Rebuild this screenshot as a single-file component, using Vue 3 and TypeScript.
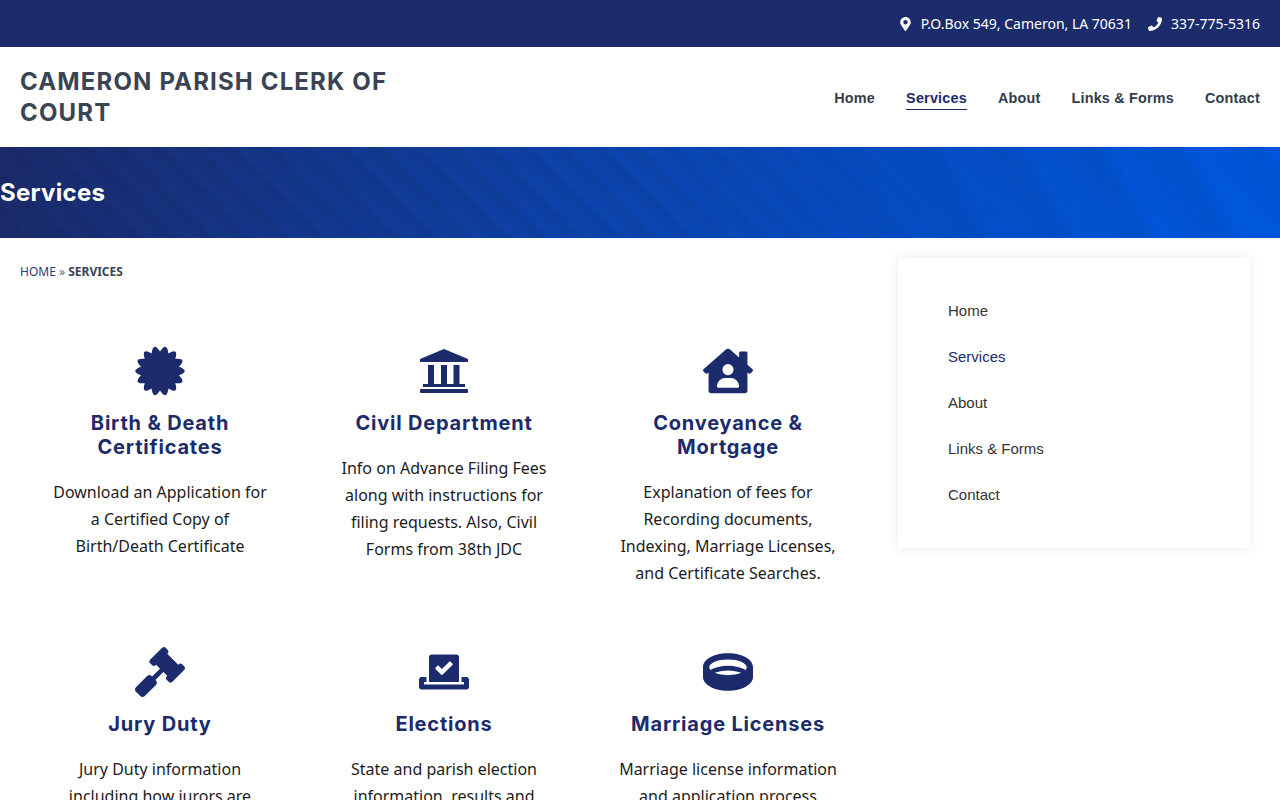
<script setup lang="ts">
interface Service {
  title: string;
  text: string;
  box: string;
  path: string;
}

// certificate badge, 14 rounded lobes with sharp valleys between them
const badge = (): string => {
  const at = (r: number, i: number): string => {
    const a = (i * Math.PI) / 14 - Math.PI / 2;
    return (25 + r * Math.cos(a)).toFixed(2) + " " + (25 + r * Math.sin(a)).toFixed(2);
  };
  let d = "M" + at(19.5, 0);
  for (let i = 0; i < 28; i += 2) {
    d += "Q" + at(30.5, i + 1) + " " + at(19.5, i + 2);
  }
  return d + "Z";
};

const services: Service[] = [
  {
    title: "Birth & Death Certificates",
    text: "Download an Application for a Certified Copy of Birth/Death Certificate",
    box: "0 0 50 50",
    path: badge(),
  },
  {
    title: "Civil Department",
    text: "Info on Advance Filing Fees along with instructions for filing requests. Also, Civil Forms from 38th JDC",
    box: "0 0 50 50",
    path: "M25 3L49 13V16H1V13ZM9 19H15V38H9ZM22 19H28V38H22ZM34.5 19H40.5V38H34.5ZM4 38H46V41H4ZM2 43H48A1 1 0 0 1 49 44V46A1 1 0 0 1 48 47H2A1 1 0 0 1 1 46V44A1 1 0 0 1 2 43Z",
  },
  {
    title: "Conveyance & Mortgage",
    text: "Explanation of fees for Recording documents, Indexing, Marriage Licenses, and Certificate Searches.",
    box: "0 0 576 512",
    path: "M570.69 236.27L512 184.44V48a16 16 0 0 0-16-16H432a16 16 0 0 0-16 16V99.67L314.78 10.3C308.5 4.61 296.53 0 288 0s-20.46 4.61-26.74 10.3l-256 226A18.27 18.27 0 0 0 0 248.2a18.64 18.64 0 0 0 4.09 10.71L25.5 282.7a21.14 21.14 0 0 0 12 5.3 21.67 21.67 0 0 0 10.69-4.11l15.9-14V480a32 32 0 0 0 32 32H480a32 32 0 0 0 32-32V269.88l15.91 14A21.82 21.82 0 0 0 538.63 288a20.89 20.89 0 0 0 11.87-5.31l21.41-23.81A21.64 21.64 0 0 0 576 248.19 21 21 0 0 0 570.69 236.27ZM288 176a64 64 0 1 1-64 64A64 64 0 0 1 288 176ZM400 448H176a16 16 0 0 1-16-16 96 96 0 0 1 96-96h64a96 96 0 0 1 96 96A16 16 0 0 1 400 448Z",
  },
  {
    title: "Jury Duty",
    text: "Jury Duty information including how jurors are",
    box: "0 0 512 512",
    path: "M504.971 199.362l-22.627-22.627c-9.373-9.373-24.569-9.373-33.941 0l-5.657 5.657L329.608 69.255l5.657-5.657c9.373-9.373 9.373-24.569 0-33.941L312.638 7.029c-9.373-9.373-24.569-9.373-33.941 0L154.246 131.48c-9.373 9.373-9.373 24.569 0 33.941l22.627 22.627c9.373 9.373 24.569 9.373 33.941 0l5.657-5.657 39.598 39.598-81.04 81.04-5.657-5.657c-12.497-12.497-32.758-12.497-45.255 0L9.373 412.118c-12.497 12.497-12.497 32.758 0 45.255l45.255 45.255c12.497 12.497 32.758 12.497 45.255 0l114.745-114.745c12.497-12.497 12.497-32.758 0-45.255l-5.657-5.657 81.04-81.04 39.598 39.598-5.657 5.657c-9.373 9.373-9.373 24.569 0 33.941l22.627 22.627c9.373 9.373 24.569 9.373 33.941 0l124.451-124.451c9.372-9.372 9.372-24.568 0-33.941z",
  },
  {
    title: "Elections",
    text: "State and parish election information, results and",
    box: "0 0 640 512",
    path: "M608 320h-64v64h22.4c5.3 0 9.6 3.6 9.6 8v16c0 4.4-4.3 8-9.6 8H73.6c-5.3 0-9.6-3.6-9.6-8v-16c0-4.4 4.3-8 9.6-8H96v-64H32c-17.7 0-32 14.3-32 32v96c0 17.7 14.3 32 32 32h576c17.7 0 32-14.3 32-32v-96c0-17.7-14.3-32-32-32zm-96 64V64.3c0-17.9-14.5-32.3-32.4-32.3H160.4C142.5 32 128 46.5 128 64.3V384h384zM211.2 202l25.5-25.3c4.2-4.2 11-4.2 15.2.1l41.3 41.6 95.2-94.4c4.2-4.2 11-4.2 15.2.1l25.3 25.5c4.2 4.2 4.2 11-.1 15.2L300.5 292c-4.2 4.2-11 4.2-15.2-.1l-74.1-74.7c-4.3-4.2-4.2-11-.1-15.2z",
  },
  {
    title: "Marriage Licenses",
    text: "Marriage license information and application process",
    box: "0 0 512 512",
    path: "M256 64C110.06 64 0 125.91 0 208v98.13C0 384.48 114.62 448 256 448s256-63.52 256-141.87V208c0-82.09-110.06-144-256-144zm0 64c106.04 0 192 35.82 192 80 0 9.26-3.97 18.12-10.91 26.39C392.44 212.4 327.67 192 256 192s-136.44 20.4-181.09 42.39C67.97 226.12 64 217.26 64 208c0-44.18 85.96-80 192-80zM120.43 264.64C155.04 249.93 201.64 240 256 240s100.96 9.93 135.57 24.64C356.84 279.07 308.93 288 256 288s-100.84-8.93-135.57-23.36z",
  },
];

const navLinks = ["Home", "Services", "About", "Links & Forms", "Contact"];
const activeLink = "Services";
</script>

<template>
  <div class="page">
    <div class="topbar">
      <svg class="pin" viewBox="0 0 384 512">
        <path d="M172.268 501.67C26.97 291.031 0 269.413 0 192 0 85.961 85.961 0 192 0s192 85.961 192 192c0 77.413-26.97 99.031-172.268 309.67-9.535 13.774-29.93 13.773-39.464 0zM192 272c44.183 0 80-35.817 80-80s-35.817-80-80-80-80 35.817-80 80 35.817 80 80 80z" />
      </svg>
      <span>P.O.Box 549, Cameron, LA 70631</span>
      <svg class="phone" viewBox="0 0 512 512">
        <path d="M493.4 24.6l-104-24c-11.3-2.6-22.9 3.3-27.5 13.9l-48 112c-4.2 9.8-1.4 21.3 6.9 28l60.6 49.6c-36 76.7-98.9 140.5-177.2 177.2l-49.6-60.6c-6.8-8.3-18.2-11.1-28-6.9l-112 48C3.9 366.5-2 378.1.6 389.4l24 104C27.1 504.2 36.7 512 48 512c256.1 0 464-207.5 464-464 0-11.2-7.7-20.9-18.6-23.4z" />
      </svg>
      <span>337-775-5316</span>
    </div>

    <header class="header">
      <div class="logo">CAMERON PARISH CLERK OF COURT</div>
      <nav class="nav">
        <a v-for="link in navLinks" :key="link" :class="{ active: link === activeLink }">{{ link }}</a>
      </nav>
    </header>

    <div class="banner">
      <h1>Services</h1>
    </div>

    <main class="main">
      <div class="content">
        <div class="crumbs"><a>HOME</a> » <strong>SERVICES</strong></div>
        <div class="grid">
          <div v-for="s in services" :key="s.title" class="card">
            <svg class="icon" :viewBox="s.box">
              <path :d="s.path" />
            </svg>
            <h3>{{ s.title }}</h3>
            <p>{{ s.text }}</p>
          </div>
        </div>
      </div>
      <aside class="side">
        <a v-for="link in navLinks" :key="link" :class="{ active: link === activeLink }">{{ link }}</a>
      </aside>
    </main>
  </div>
</template>

<style>
html,
body {
  margin: 0;
  background: #fff;
}
</style>

<style scoped>
.page {
  font-family: "Noto Sans", sans-serif;
  color: #1c1c1c;
  height: 800px;
  overflow: hidden;
}
.topbar {
  height: 47px;
  background: #1c2b6c;
  color: #fff;
  display: flex;
  align-items: center;
  justify-content: flex-end;
  padding: 0 20px;
  font-size: 14px;
}
.topbar svg {
  fill: #fff;
  height: 14px;
}
.pin {
  width: 11px;
  margin-right: 10px;
}
.phone {
  width: 14px;
  margin-left: 16px;
  margin-right: 9px;
}
.header {
  height: 100px;
  display: flex;
  align-items: center;
  justify-content: space-between;
  padding: 0 20px;
}
.logo {
  width: 400px;
  font-family: Inter, sans-serif;
  font-weight: 700;
  font-size: 24px;
  letter-spacing: 1.15px;
  line-height: 31px;
  color: #3a4454;
}
.nav {
  display: flex;
  gap: 31px;
  margin-top: 6px;
  font-family: "Liberation Sans", sans-serif;
  font-weight: 700;
  font-size: 14.4px;
  letter-spacing: 0.2px;
  color: #333c4b;
}
.nav a {
  padding-bottom: 3px;
  border-bottom: 1px solid transparent;
}
.nav a.active {
  color: #1c2b6c;
  border-bottom-color: #1c2b6c;
}
.banner {
  position: relative;
  height: 91px;
  display: flex;
  align-items: center;
  overflow: hidden;
  background: linear-gradient(100deg, #1c2b6c 0%, #0d44ad 45%, #0059e0 100%);
}
/* faint diagonal sheen lying over the gradient */
.banner::before,
.banner::after {
  content: "";
  position: absolute;
  inset: 0;
}
.banner::before {
  background: repeating-linear-gradient(45deg, rgba(0, 0, 0, 0) 0, rgba(0, 0, 0, 0.07) 20px, rgba(0, 0, 0, 0) 26px);
  -webkit-mask-image: linear-gradient(to right, #000 0 50%, transparent 80%);
  mask-image: linear-gradient(to right, #000 0 50%, transparent 80%);
}
.banner::after {
  background: repeating-linear-gradient(60deg, rgba(0, 0, 0, 0) 0, rgba(0, 0, 0, 0.06) 55px, rgba(0, 0, 0, 0) 72px);
  -webkit-mask-image: linear-gradient(to right, transparent 60%, #000 82%);
  mask-image: linear-gradient(to right, transparent 60%, #000 82%);
}
.banner h1 {
  position: relative;
  z-index: 1;
  margin: 0;
  font-family: Inter, sans-serif;
  font-weight: 700;
  font-size: 24px;
  letter-spacing: 0.3px;
  color: #fff;
}
.main {
  display: flex;
  align-items: flex-start;
}
.content {
  width: 870px;
}
.crumbs {
  margin: 24px 0 0 20px;
  font-size: 12px;
  line-height: 20px;
  color: #5c6477;
}
.crumbs a {
  color: #2c3a78;
}
.crumbs strong {
  color: #3a4454;
}
.grid {
  margin: 64px 0 0 18px;
  display: grid;
  grid-template-columns: repeat(3, 284px);
  row-gap: 60px;
}
.card {
  display: flex;
  flex-direction: column;
  align-items: center;
  text-align: center;
  padding: 0 30px;
}
.icon {
  width: 50px;
  height: 50px;
  fill: #1c2b6c;
}
.card h3 {
  margin: 15px 0 20px;
  font-family: Inter, sans-serif;
  font-weight: 700;
  font-size: 20px;
  letter-spacing: 0.8px;
  line-height: 24px;
  color: #1c2b6c;
}
.card p {
  margin: 0;
  font-size: 16px;
  line-height: 27px;
}
.side {
  width: 352px;
  margin: 20px 0 0 28px;
  box-sizing: border-box;
  padding: 30px 50px;
  background: #fff;
  box-shadow: 0 0 10px rgba(0, 0, 0, 0.09);
  font-family: "Liberation Sans", sans-serif;
  font-size: 15px;
  color: #333;
}
.side a {
  display: block;
  line-height: 46px;
}
.side a.active {
  color: #1c2b6c;
}
</style>
